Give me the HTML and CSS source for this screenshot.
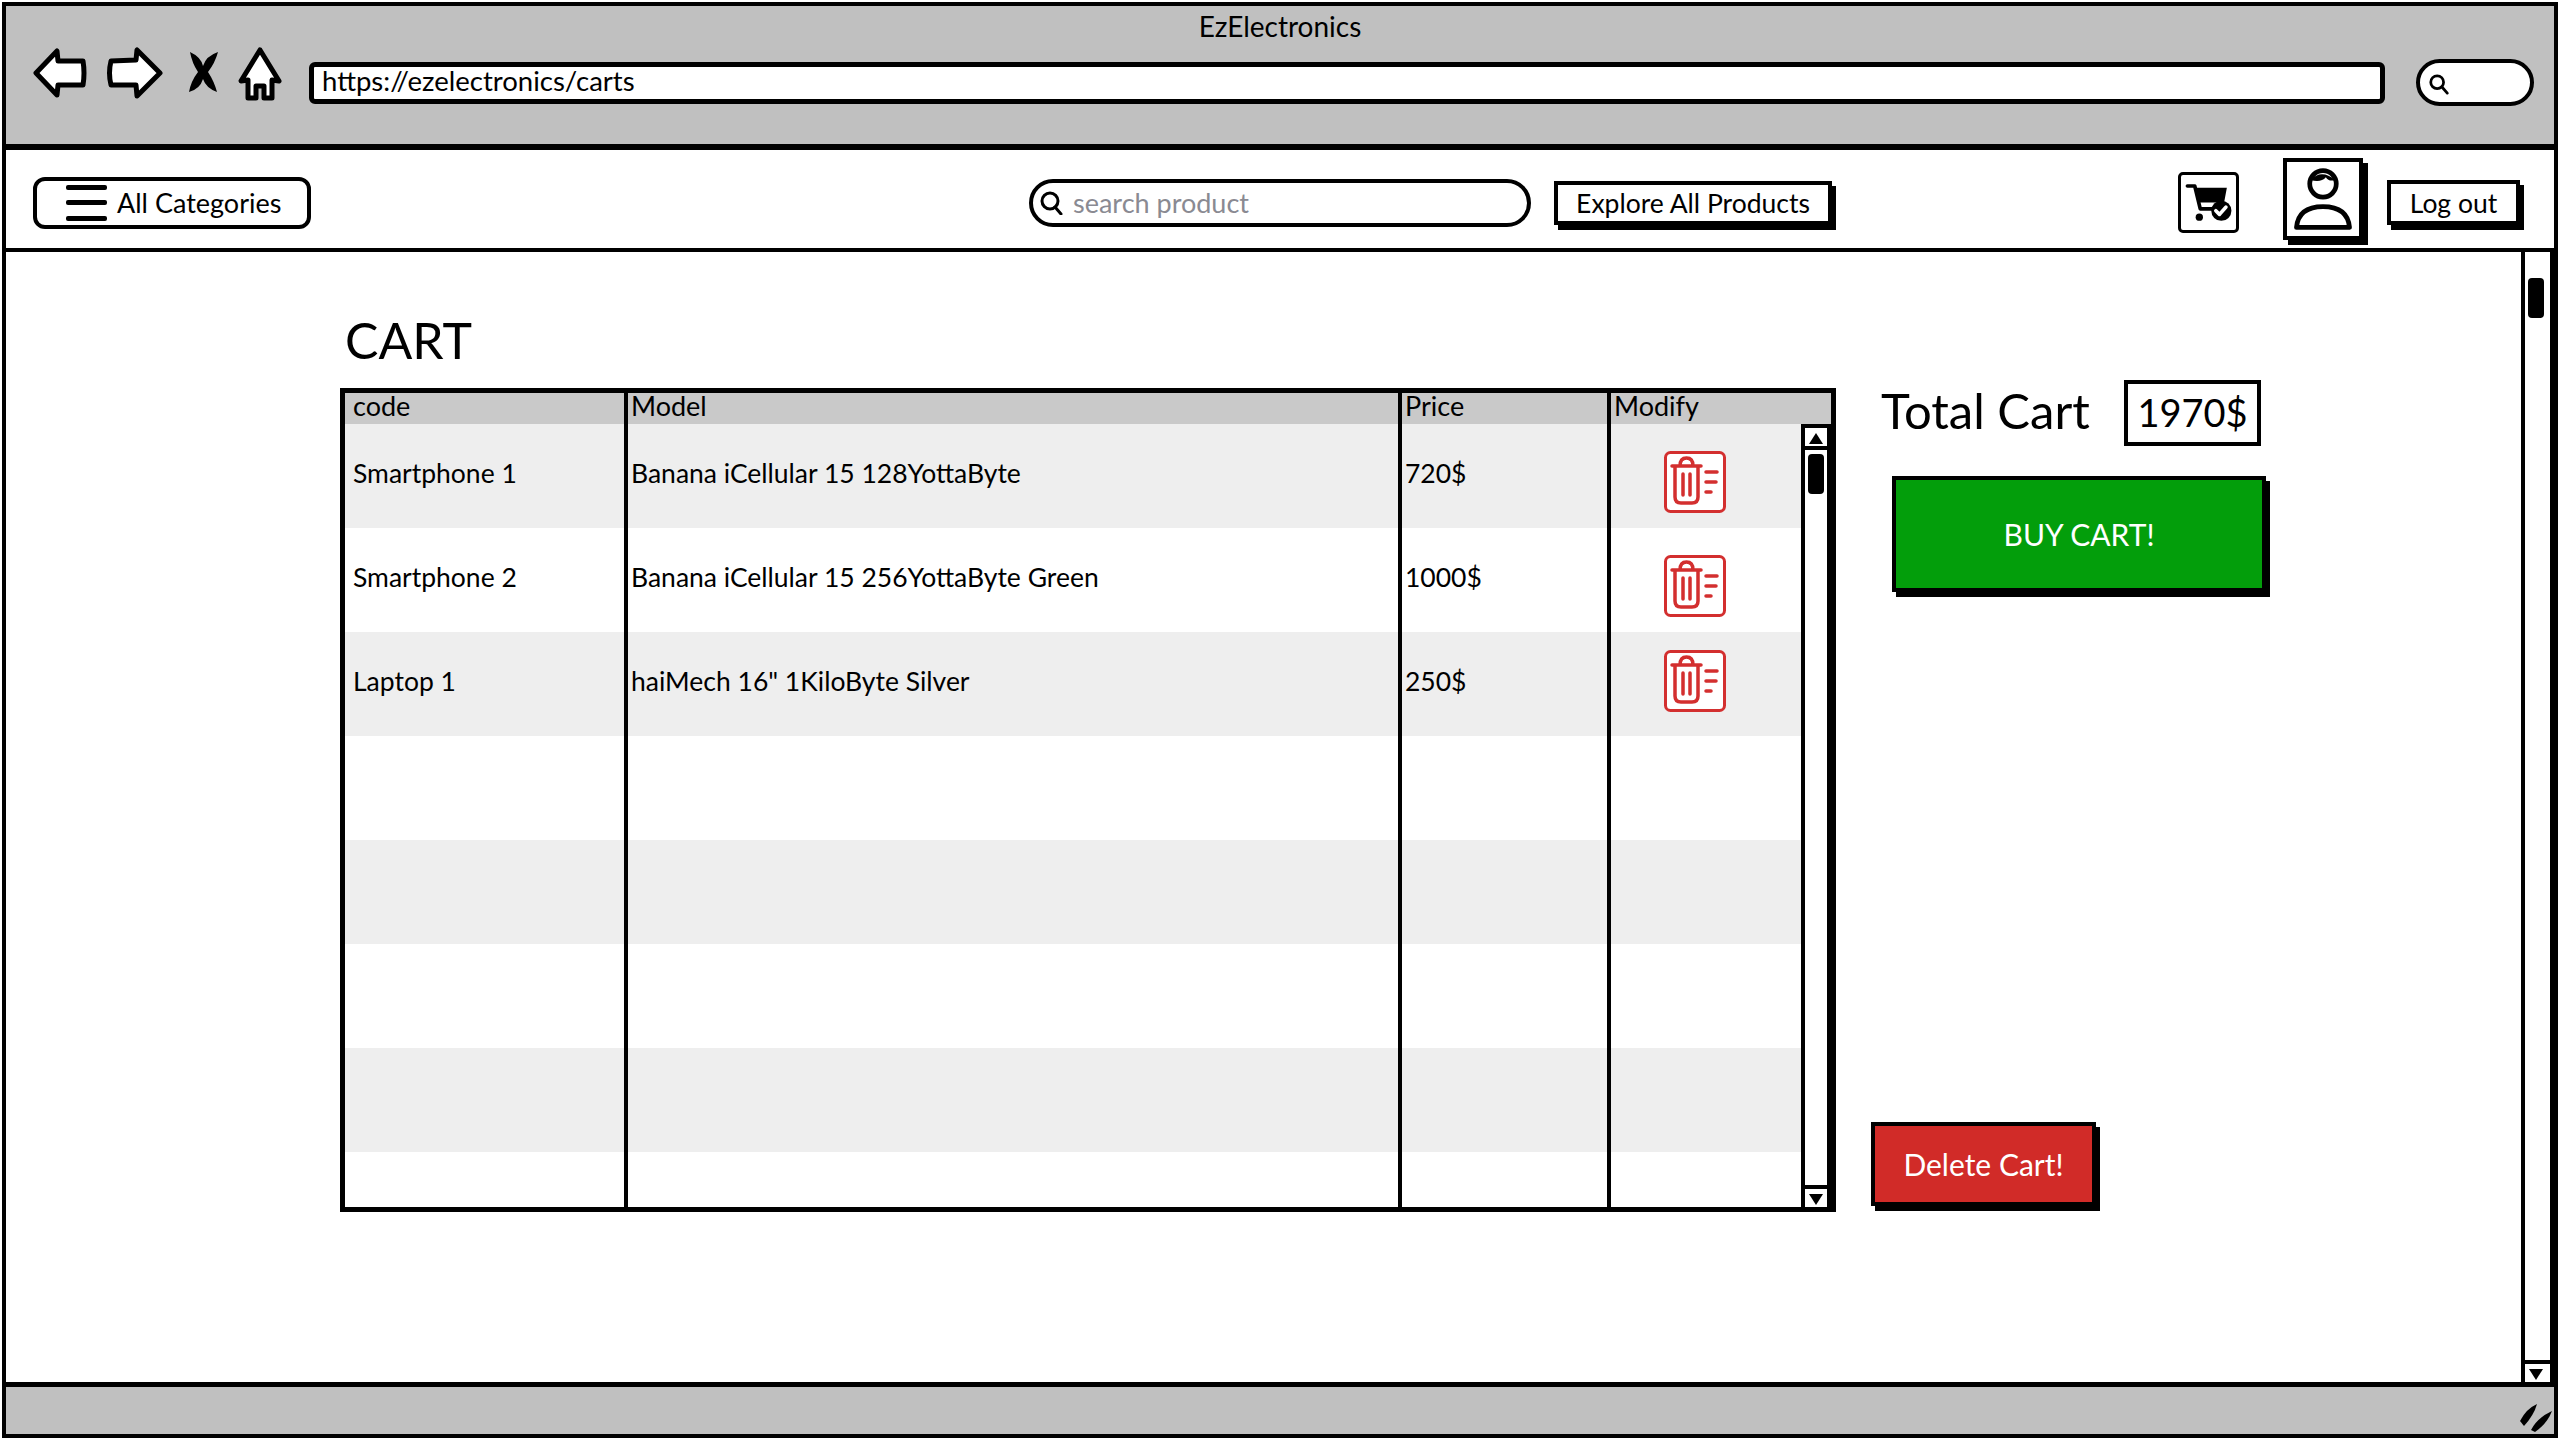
FILE: index.html
```html
<!DOCTYPE html>
<html lang="en">
  <head>
    <meta charset="UTF-8" />
    <title>EzElectronics</title>
    <link rel="stylesheet" href="styles.css">
  </head>
  <body>
    <div class="window">
      <header class="browser-bar">
        <div class="browser-title">EzElectronics</div>
        <div class="browser-row">
          <svg class="nav-icon back" viewBox="0 0 54 52"><path d="M3 26 L24 4 L25 14 L50 14 Q52 26 50 38 L25 38 L24 48 Z" /></svg>
          <svg class="nav-icon forward" viewBox="0 0 57 52"><path d="M54 26 L31 3 L30 13 L5 14 Q2 26 5 38 L30 38 L31 49 Z" /></svg>
          <svg class="nav-icon stop" viewBox="0 0 31 42"><path class="solid" d="M2 1 Q13 6 15 15 Q18 5 30 1 Q27 12 20 21 Q26 30 29 41 Q18 37 15 28 Q12 38 1 41 Q3 30 10 21 Q4 12 2 1 Z" /></svg>
          <svg class="nav-icon home" viewBox="0 0 44 54"><path d="M22 3 L41 34 L34 33 L34 51 L26 51 L26 39 L18 39 L18 51 L10 51 L10 33 L3 34 Z" /></svg>
          <div class="url-field">https://ezelectronics/carts</div>
          <div class="browser-search">
            <svg class="mini-lens" viewBox="0 0 24 24"><circle cx="10" cy="10" r="7" /><path d="M15 15 L21 22" /></svg>
          </div>
        </div>
      </header>

      <nav class="toolbar">
        <button class="categories-btn">
          <span class="hamburger"><i></i><i></i><i></i></span>
          All Categories
        </button>
        <div class="search-box">
          <svg class="lens" viewBox="0 0 24 24"><circle cx="11" cy="10" r="8" /><path d="M16 16 L22 23" /></svg>
          <span>search product</span>
        </div>
        <button class="sketch-btn explore-btn">Explore All Products</button>
        <div class="cart-icon">
          <svg viewBox="0 0 60 60">
            <path class="cart-line" d="M7 12 L15 12 L21 37 L38 37" />
            <path class="solid" d="M16 14 L50 14 L47 30 L20 30 Z" />
            <circle class="solid" cx="20" cy="46" r="4" />
            <circle class="solid" cx="44" cy="39" r="11" />
            <path class="check" d="M38 39 L42 43 L49 35" />
          </svg>
        </div>
        <div class="avatar">
          <svg viewBox="0 0 76 76">
            <circle cx="38" cy="22" r="14" />
            <path class="solid" d="M25 18 Q36 6 51 18 Q44 20 41 15 Q36 21 25 18 Z" />
            <path d="M10 68 Q12 46 38 46 Q64 46 66 68 Z" />
          </svg>
        </div>
        <button class="sketch-btn logout-btn">Log out</button>
      </nav>

      <div class="content">
        <main class="page">
          <section class="cart-section">
            <h1>CART</h1>
            <div class="table-wrap">
              <table class="cart-table">
                <colgroup>
                  <col class="col-code" />
                  <col class="col-model" />
                  <col class="col-price" />
                  <col />
                </colgroup>
                <thead>
                  <tr>
                    <th class="first">code</th>
                    <th>Model</th>
                    <th>Price</th>
                    <th>Modify</th>
                  </tr>
                </thead>
                <tbody>
                  <tr>
                    <td class="first">Smartphone 1</td>
                    <td>Banana iCellular 15 128YottaByte</td>
                    <td>720$</td>
                    <td><svg class="trash low" viewBox="0 0 62 62"><use href="#trash-icon" /></svg></td>
                  </tr>
                  <tr>
                    <td class="first">Smartphone 2</td>
                    <td>Banana iCellular 15 256YottaByte Green</td>
                    <td>1000$</td>
                    <td><svg class="trash low" viewBox="0 0 62 62"><use href="#trash-icon" /></svg></td>
                  </tr>
                  <tr>
                    <td class="first">Laptop 1</td>
                    <td>haiMech 16" 1KiloByte Silver</td>
                    <td>250$</td>
                    <td><svg class="trash" viewBox="0 0 62 62"><use href="#trash-icon" /></svg></td>
                  </tr>
                  <tr><td></td><td></td><td></td><td></td></tr>
                  <tr><td></td><td></td><td></td><td></td></tr>
                  <tr><td></td><td></td><td></td><td></td></tr>
                  <tr><td></td><td></td><td></td><td></td></tr>
                  <tr class="cut"><td></td><td></td><td></td><td></td></tr>
                </tbody>
              </table>
              <div class="scrollbar table-scroll">
                <span class="arrow up"></span>
                <span class="thumb"></span>
                <span class="arrow down"></span>
              </div>
            </div>
          </section>

          <aside class="summary">
            <div class="total-row">
              <span class="total-label">Total Cart</span>
              <span class="total-value">1970$</span>
            </div>
            <button class="sketch-btn buy-btn">BUY CART!</button>
            <button class="sketch-btn delete-btn">Delete Cart!</button>
          </aside>
        </main>
        <div class="scrollbar page-scroll">
          <span class="thumb"></span>
          <span class="arrow down"></span>
        </div>
      </div>

      <footer class="status-bar">
        <svg class="grip" viewBox="0 0 32 28">
          <path class="solid" d="M0 17 Q6 5 17 0 Q14 11 4 22 Z" />
          <path class="solid" d="M11 26 Q17 14 32 7 Q27 20 15 28 Z" />
        </svg>
      </footer>
    </div>

    <svg class="sprite">
      <symbol id="trash-icon" viewBox="0 0 62 62">
        <rect class="t-frame" x="1.5" y="1.5" width="59" height="59" rx="5" />
        <path class="t-line" d="M8 15 L37 15 M16 15 Q16 7 22.5 7 Q29 7 29 15 M11 15 L11 46 Q11 52 17 52 L28 52 Q34 52 34 46 L34 15 M19 23 L19 44 M26 23 L26 44" />
        <path class="t-line" d="M42 21 L53 21 M42 31 L52 31 M42 41 L47 41" />
      </symbol>
    </svg>
  </body>
</html>
```

FILE: styles.css
```css
* {
  box-sizing: border-box;
}

body {
  margin: 0;
  background-color: #fff;
  color: #000;
  font-family: Lato, "Open Sans", sans-serif;
  font-size: 26.5px;
}

button {
  font-family: inherit;
  color: inherit;
  padding: 0;
  background: none;
}

.sprite {
  display: none;
}

svg {
  display: block;
}

svg path,
svg circle {
  fill: #fff;
  stroke: #000;
  stroke-width: 4;
  stroke-linejoin: round;
  stroke-linecap: round;
}

svg .solid {
  fill: #000;
  stroke: none;
}

.window {
  display: flex;
  flex-direction: column;
  height: 1436px;
  margin: 2px;
  border: 4px solid #000;
  overflow: hidden;
}

/* browser chrome */
.browser-bar {
  height: 144px;
  background-color: #c0c0c0;
  border-bottom: 6px solid #000;
  flex: none;
}

.browser-title {
  text-align: center;
  font-size: 28px;
  line-height: 30px;
  padding-top: 5px;
}

.browser-row {
  display: flex;
  align-items: flex-start;
  padding: 0 20px 0 27px;
}

.nav-icon {
  margin-top: 6px;
}

.nav-icon path {
  stroke-width: 5;
}

.nav-icon.back {
  width: 54px;
  height: 52px;
}

.nav-icon.forward {
  width: 57px;
  height: 52px;
  margin-left: 19px;
}

.nav-icon.stop {
  width: 31px;
  height: 42px;
  margin: 10px 0 0 25px;
}

.nav-icon.home {
  width: 44px;
  height: 54px;
  margin-left: 19px;
}

.url-field {
  flex: 1;
  height: 42px;
  margin: 21px 0 0 27px;
  padding-left: 8px;
  background-color: #fff;
  border: 5px solid #000;
  border-radius: 6px;
  font-size: 27.5px;
  line-height: 28px;
}

.browser-search {
  width: 118px;
  height: 47px;
  margin: 18px 0 0 31px;
  padding: 10px 0 0 8px;
  background-color: #fff;
  border: 4px solid #000;
  border-radius: 24px;
}

.mini-lens {
  width: 22px;
  height: 22px;
}

/* toolbar */
.toolbar {
  display: flex;
  align-items: center;
  height: 102px;
  padding: 7px 0 0 27px;
  border-bottom: 4px solid #000;
  flex: none;
}

.categories-btn {
  display: flex;
  align-items: center;
  width: 278px;
  height: 52px;
  padding-left: 29px;
  background-color: #fff;
  border: 4px solid #000;
  border-radius: 12px;
  font-size: 27px;
}

.hamburger {
  display: flex;
  flex-direction: column;
  justify-content: space-between;
  width: 41px;
  height: 36px;
  margin-right: 10px;
}

.hamburger i {
  height: 5px;
  background-color: #000;
  border-radius: 2px;
}

.search-box {
  display: flex;
  align-items: center;
  width: 502px;
  height: 48px;
  margin-left: 718px;
  padding-left: 6px;
  border: 4px solid #000;
  border-radius: 24px;
  color: #8a8a92;
  font-size: 27px;
}

.lens {
  width: 24px;
  height: 24px;
  margin-right: 10px;
}

.lens circle,
.lens path,
.mini-lens circle,
.mini-lens path {
  fill: none;
  stroke-width: 3;
}

.sketch-btn {
  border: 4px solid #000;
  box-shadow: 4px 5px 0 #000;
  background-color: #fff;
  font-size: 26.5px;
}

.explore-btn {
  width: 278px;
  height: 44px;
  margin-left: 23px;
}

.cart-icon {
  width: 61px;
  height: 61px;
  margin-left: 346px;
  border: 3px solid #000;
  border-radius: 5px;
}

.cart-icon svg {
  width: 55px;
  height: 55px;
}

.cart-line {
  fill: none !important;
}

svg .check {
  fill: none;
  stroke: #fff;
}

.avatar {
  width: 80px;
  height: 82px;
  margin: 0 0 7px 44px;
  border: 4px solid #000;
  box-shadow: 5px 5px 0 #000;
}

.avatar svg {
  width: 72px;
  height: 74px;
}

.avatar circle,
.avatar path {
  stroke-width: 5;
}

.avatar svg .solid {
  stroke: none;
}

.logout-btn {
  width: 133px;
  height: 45px;
  margin-left: 24px;
}

/* main area */
.content {
  display: flex;
  flex: 1;
  min-height: 0;
}

.page {
  display: flex;
  flex: 1;
  padding: 0 0 0 334px;
}

.cart-section {
  width: 1496px;
}

h1 {
  margin: 0;
  padding: 60px 0 0 5px;
  height: 136px;
  font-size: 50px;
  font-weight: 400;
  line-height: 56px;
}

.table-wrap {
  position: relative;
  height: 824px;
  border: 5px solid #000;
  overflow: hidden;
}

.cart-table {
  width: 100%;
  table-layout: fixed;
  border-collapse: collapse;
}

.col-code {
  width: 281px;
}

.col-model {
  width: 774px;
}

.col-price {
  width: 209px;
}

.cart-table th,
.cart-table td {
  padding: 0 0 0 3px;
  border-right: 4px solid #000;
  text-align: left;
  font-weight: 400;
}

.cart-table th:last-child,
.cart-table td:last-child {
  border-right: none;
}

.cart-table th {
  height: 31px;
  background-color: #c9c9c9;
  font-size: 27px;
  line-height: 26px;
  vertical-align: top;
}

.cart-table .first {
  padding-left: 8px;
}

.cart-table td {
  height: 104px;
  padding-bottom: 6px;
}

.cart-table .cut td {
  height: 55px;
}

.cart-table tbody tr:nth-child(odd) {
  background-color: #eee;
}

.trash {
  width: 62px;
  height: 62px;
  margin-left: 50px;
}

.trash.low {
  margin-top: 17px;
}

.t-frame {
  fill: #fff;
  stroke: #d32f2f;
  stroke-width: 3;
}

tr:nth-child(odd) .t-frame {
  fill: none;
}

svg .t-line {
  fill: none;
  stroke: #d32f2f;
  stroke-width: 3.5;
}

/* scrollbars */
.scrollbar {
  display: flex;
  flex-direction: column;
  background-color: #fff;
  border-left: 4px solid #000;
}

.table-scroll {
  position: absolute;
  right: 0;
  top: 31px;
  bottom: 0;
  width: 30px;
  border-top: 4px solid #000;
  border-right: 4px solid #000;
}

.page-scroll {
  width: 33px;
  padding-top: 26px;
  border-right: 4px solid #000;
  flex: none;
}

.thumb {
  width: 16px;
  height: 40px;
  margin-left: 3px;
  background-color: #000;
  border-radius: 4px;
}

.arrow {
  position: relative;
  height: 22px;
}

.arrow::after {
  content: "";
  position: absolute;
  left: 4px;
  top: 5px;
  border-left: 7px solid transparent;
  border-right: 7px solid transparent;
}

.arrow.up {
  border-bottom: 4px solid #000;
  margin-bottom: 4px;
}

.arrow.up::after {
  border-bottom: 11px solid #000;
}

.arrow.down {
  margin-top: auto;
  border-top: 4px solid #000;
}

.arrow.down::after {
  border-top: 11px solid #000;
}

/* right column */
.summary {
  display: flex;
  flex-direction: column;
  padding: 0 0 176px 35px;
  flex: 1;
}

.total-row {
  display: flex;
  align-items: center;
  margin: 128px 0 0 10px;
}

.total-label {
  width: 243px;
  padding-bottom: 6px;
  font-size: 49px;
}

.total-value {
  width: 137px;
  height: 66px;
  border: 4px solid #000;
  text-align: center;
  font-size: 38px;
  line-height: 56px;
}

.buy-btn {
  width: 374px;
  height: 116px;
  margin: 30px 0 0 21px;
  background-color: #039e0b;
  color: #fff;
  font-size: 30px;
}

.delete-btn {
  width: 225px;
  height: 84px;
  margin-top: auto;
  background-color: #d12b28;
  color: #fff;
  font-size: 30px;
}

.status-bar {
  display: flex;
  justify-content: flex-end;
  align-items: flex-end;
  height: 52px;
  padding: 0 2px 2px 0;
  background-color: #c0c0c0;
  border-top: 5px solid #000;
  flex: none;
}

.grip {
  width: 32px;
  height: 28px;
}
```
